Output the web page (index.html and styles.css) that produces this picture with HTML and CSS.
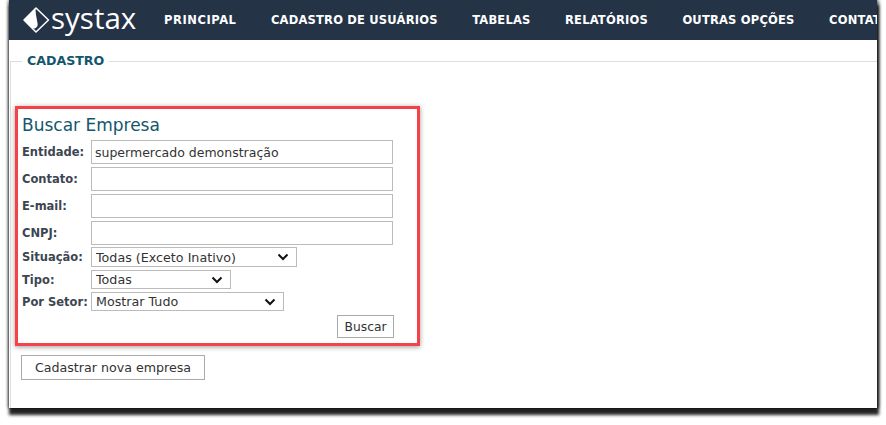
FILE: index.html
```html
<!DOCTYPE html>
<html lang="pt">
<head>
<meta charset="utf-8">
<title>Buscar Empresa</title>
<link rel="stylesheet" href="styles.css">
</head>
<body>
<div class="window">
  <header class="topbar">
    <div class="logo">
      <svg class="logo-mark" width="27" height="26" viewBox="0 0 27 26">
        <path d="M13 1 L25.5 13 L13 25 L1 13 Z" fill="none" stroke="#fff" stroke-width="1.5" stroke-linejoin="round"/>
        <path d="M12.5 1.5 L1 13 L8 20.5 C11.5 23 15.5 20.5 14.5 16 C13.5 11 12.5 6 12.5 1.5 Z" fill="#fff"/>
      </svg>
      <span class="logo-text">systax</span>
    </div>
    <nav class="menu">
      <a class="menu-first">PRINCIPAL</a>
      <a>CADASTRO DE USUÁRIOS</a>
      <a>TABELAS</a>
      <a>RELATÓRIOS</a>
      <a>OUTRAS OPÇÕES</a>
      <a>CONTATO</a>
    </nav>
  </header>
  <main class="content">
    <fieldset class="section">
      <legend>CADASTRO</legend>
      <form class="search-box">
        <h2>Buscar Empresa</h2>
        <div class="fields">
          <label>Entidade:</label><input class="text" type="text" value="supermercado demonstração">
          <label>Contato:</label><input class="text" type="text">
          <label>E-mail:</label><input class="text" type="text">
          <label>CNPJ:</label><input class="text text-last" type="text">
          <label class="sel">Situação:</label><select class="s-situacao"><option>Todas (Exceto Inativo)</option></select>
          <label class="sel">Tipo:</label><select class="s-tipo"><option>Todas</option></select>
          <label class="sel">Por Setor:</label><select class="s-setor"><option>Mostrar Tudo</option></select>
        </div>
        <div class="actions"><button type="button" class="btn">Buscar</button></div>
      </form>
      <button type="button" class="btn btn-new">Cadastrar nova empresa</button>
    </fieldset>
  </main>
</div>
</body>
</html>
```
FILE: styles.css
```css
* { box-sizing: border-box; }
html, body { margin: 0; height: 100%; background: #fff; overflow: hidden; }
body { padding: 0 9px; font-family: "DejaVu Sans", Verdana, sans-serif; color: #333; }
.window {
  width: 868px;
  height: 408px;
  background: #fff;
  overflow: hidden;
  box-shadow: -1px 0 3px rgba(0,0,0,.55), 2px 0 3px rgba(0,0,0,.55), 1px 6px 3px 1px rgba(0,0,0,.85);
}
.topbar {
  height: 40px;
  background: #253347;
  display: flex;
  align-items: center;
  white-space: nowrap;
  overflow: hidden;
}
.logo { display: flex; align-items: center; width: 155px; height: 40px; flex: none; padding-left: 14px; }
.logo-mark { flex: none; }
.logo-text {
  font-family: "Open Sans", sans-serif;
  font-size: 29.5px;
  line-height: 34px;
  color: #fff;
  margin-left: 1px;
  padding-bottom: 4px;
}
.menu { display: flex; gap: 34.5px; font-size: 11.5px; font-weight: 700; letter-spacing: .2px; color: #fff; flex: none; }
.menu-first { letter-spacing: .55px; }
.content { padding: 14px 0 0 1px; }
.section {
  margin: 0 -20px 0 0;
  padding: 38px 0 0 4px;
  border: 0;
  border-top: 1px solid #ddd;
  border-left: 1px solid #ddd;
  min-width: 0;
  height: 360px;
}
.section legend {
  margin-left: 7px;
  padding: 0 5px;
  font-size: 12.6px;
  font-weight: 700;
  color: #14566b;
  line-height: 14px;
}
.search-box {
  width: 405px;
  height: 240px;
  border: 3px solid #f44248;
  box-shadow: 0 1px 5px rgba(0,0,0,.4);
  padding: 6px 0 0 4px;
}
.search-box h2 {
  margin: 0 0 4px;
  font-size: 17px;
  font-weight: 400;
  line-height: 21px;
  color: #14566b;
}
.fields { display: grid; grid-template-columns: 69px auto; align-items: center; justify-items: start; }
.fields label { font-size: 11.5px; font-weight: 700; color: #3c4650; margin-top: -3px; }
.text {
  width: 302px;
  height: 24px;
  margin-bottom: 3px;
  border: 1px solid #bbb;
  padding: 0 3px;
  font: 12.5px "DejaVu Sans", sans-serif;
  color: #333;
  background: #fff;
  border-radius: 0;
  outline: 0;
}
.text-last { margin-bottom: 2px; }
select {
  appearance: none;
  height: 19px;
  margin-bottom: 3px;
  border: 1px solid #bbb;
  background: #fff url("data:image/svg+xml,%3Csvg xmlns='http://www.w3.org/2000/svg' width='12' height='8'%3E%3Cpath d='M1.5 1.5 L6 6 L10.5 1.5' fill='none' stroke='%23111' stroke-width='2'/%3E%3C/svg%3E") no-repeat right 7px center;
  font: 12.7px "DejaVu Sans", sans-serif;
  color: #333;
  padding: 0 0 0 4px;
  border-radius: 0;
}
.s-situacao { width: 206px; height: 20px; }
.s-tipo { width: 140px; }
.s-setor { width: 193px; }
.actions { display: flex; justify-content: flex-end; width: 372px; margin-top: 1px; }
.btn {
  height: 23px;
  width: 57px;
  background: #fff;
  border: 1px solid #aaa;
  font: 12.3px "DejaVu Sans", sans-serif;
  color: #333;
  padding: 0;
  border-radius: 0;
}
.btn-new { display: block; width: 184px; height: 25px; margin: 9px 0 0 6px; font-size: 12.65px; }
```
